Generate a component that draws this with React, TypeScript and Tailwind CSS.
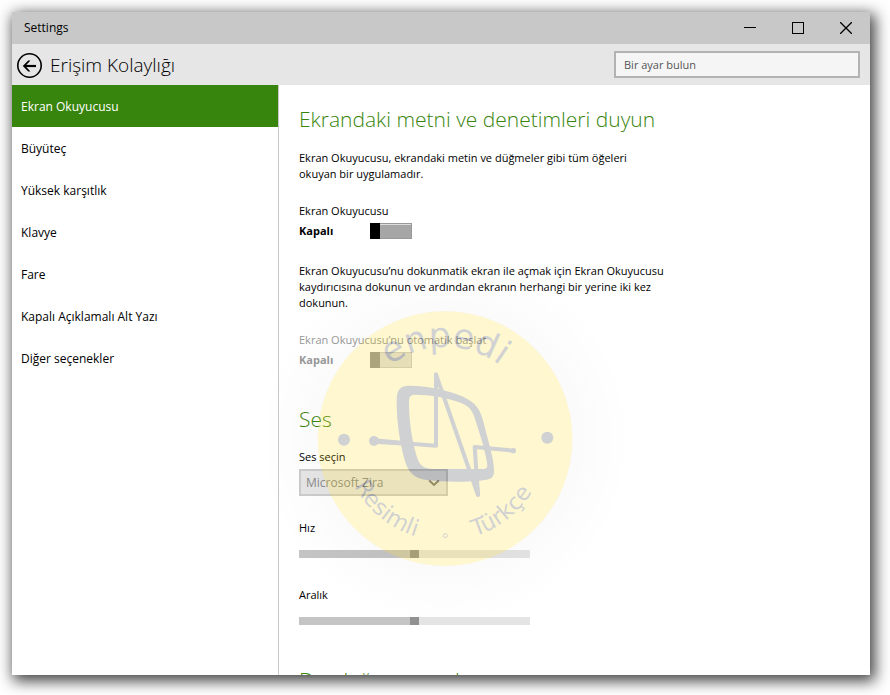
import { useState } from "react";

const NAV_ITEMS = [
  "Ekran Okuyucusu",
  "Büyüteç",
  "Yüksek karşıtlık",
  "Klavye",
  "Fare",
  "Kapalı Açıklamalı Alt Yazı",
  "Diğer seçenekler",
];

function TitleBar() {
  return (
    <div className="flex h-8 shrink-0 items-center justify-between bg-[#c8c8c8] pl-3">
      <span className="text-xs">Settings</span>
      <div className="flex h-full">
        <button aria-label="Minimize" className="flex w-12 items-center justify-center">
          <svg className="size-3" viewBox="0 0 12 12" stroke="#000" shapeRendering="crispEdges">
            <path d="M0 5.5h12" />
          </svg>
        </button>
        <button aria-label="Maximize" className="flex w-12 items-center justify-center">
          <svg className="size-3" viewBox="0 0 12 12" fill="none" stroke="#000" shapeRendering="crispEdges">
            <rect x="0.5" y="0.5" width="11" height="11" />
          </svg>
        </button>
        <button aria-label="Close" className="flex w-12 items-center justify-center">
          <svg className="size-3" viewBox="0 0 12 12" stroke="#000" strokeWidth="1.3">
            <path d="M0 0l12 12M12 0L0 12" />
          </svg>
        </button>
      </div>
    </div>
  );
}

function Header() {
  return (
    <header className="flex h-[41px] shrink-0 items-center justify-between bg-[#e6e6e6] pr-[10px] pl-[5px]">
      <div className="flex items-center gap-2 pt-0.5">
        <button aria-label="Geri">
          <svg className="size-[25px]" viewBox="0 0 25 25" fill="none" stroke="#000">
            <circle cx="12.5" cy="12.5" r="11.7" strokeWidth="1.6" />
            <path d="M19 13H8" strokeWidth="2.2" />
            <path d="M13.4 7.4h-2.2L5.8 13l5.4 5.6h2.2L8.4 13z" fill="#000" stroke="none" />
          </svg>
        </button>
        <h1 className="text-[19px] font-light">Erişim Kolaylığı</h1>
      </div>
      <input
        type="text"
        aria-label="Bir ayar bulun"
        placeholder="Bir ayar bulun"
        className="h-[27px] w-[246px] border-2 border-[#b3b3b3] bg-[#f5f5f5] px-2 text-[11px] outline-none placeholder:text-[#555555]"
      />
    </header>
  );
}

interface ToggleProps {
  id: string;
  label: string;
  disabled?: boolean;
}

function Toggle({ id, label, disabled }: ToggleProps) {
  const [on, setOn] = useState(false);
  return (
    <div className={disabled ? "text-[#999999]" : ""}>
      <label htmlFor={id} className="block leading-5">{label}</label>
      <div className="flex h-5 items-center">
        <span className="w-[71px] font-bold">{on ? "Açık" : "Kapalı"}</span>
        <button
          id={id}
          role="switch"
          aria-checked={on}
          disabled={disabled}
          onClick={() => setOn(!on)}
          className={`flex h-4 w-[42px] border ${on ? "justify-end" : "justify-start"} ${disabled ? "border-[#cccccc] bg-[#e0e0e0]" : "border-[#999999] bg-[#a6a6a6] shadow-[inset_0_1px_0_#dddddd]"}`}
        >
          <span className={`-m-px h-4 w-[10px] ${disabled ? "bg-[#999999]" : "bg-black"}`} />
        </button>
      </div>
    </div>
  );
}

function Slider({ id, label }: { id: string; label: string }) {
  return (
    <div className="w-[231px]">
      <label htmlFor={id} className="block leading-4">{label}</label>
      <input
        id={id}
        type="range"
        disabled
        defaultValue={50}
        className="mt-[14px] block h-2 w-full appearance-none bg-linear-to-r from-[#c4c4c4] from-50% to-[#e4e4e4] to-50% [&::-webkit-slider-thumb]:h-2 [&::-webkit-slider-thumb]:w-[9px] [&::-webkit-slider-thumb]:appearance-none [&::-webkit-slider-thumb]:bg-[#919191]"
      />
    </div>
  );
}

// Translucent stamp that floats over the settings
function Watermark() {
  return (
    <svg
      aria-hidden="true"
      className="pointer-events-none absolute top-[167px] left-[246px] size-[374px]"
      viewBox="-126 -144 1122 1122"
    >
      <defs>
        <radialGradient id="halo">
          <stop offset="0.68" stopColor="#000" stopOpacity="0" />
          <stop offset="0.68" stopColor="#000" stopOpacity="0.018" />
          <stop offset="1" stopColor="#000" stopOpacity="0" />
        </radialGradient>
        <path id="arcTop" d="M160 416A275 275 0 0 1 710 416" />
        <path id="arcBottom" d="M129 416A306 306 0 0 0 741 416" />
      </defs>
      <circle cx="435" cy="416" r="560" fill="url(#halo)" />
      <g opacity="0.18">
        <circle cx="435" cy="416" r="382" fill="#ffd800" />
        <g fill="#00050a" fontFamily="DejaVu Sans, sans-serif">
          <circle cx="132" cy="419" r="18" />
          <circle cx="742" cy="413" r="18" />
          <circle cx="222" cy="423" r="15" />
          <circle cx="640" cy="452" r="8" />
          <path
            fillRule="evenodd"
            d="M290 305C290 270 298 257 330 257C380 257 430 268 470 283C515 299 537 317 548 358L567 430C576 465 582 490 582 513C582 531 574 537 560 539C510 547 440 547 385 541C345 536 325 520 314 480C300 430 290 365 290 305ZM327 307C327 290 331 284 346 284C390 284 440 293 478 307C508 318 518 330 528 366L548 430C555 460 561 480 562 495C562 504 558 507 548 507L400 507C372 507 359 497 352 475C336 425 327 365 327 307Z"
          />
          <path
            d="M222 423L408 437V223L534 585L524 441L640 452"
            fill="none"
            stroke="#00050a"
            strokeWidth="12"
            strokeLinejoin="round"
          />
          <path d="M222 415L320 424V437L222 431ZM512 515L532 500L540 588H529Z" />
          <circle cx="436" cy="707" r="6" fill="none" stroke="#00050a" strokeWidth="3" />
          <text fontSize="104" textAnchor="middle">
            <textPath href="#arcTop" startOffset="50%">enpedi</textPath>
          </text>
          <text fontSize="68" textAnchor="middle">
            <textPath href="#arcBottom" startOffset="28%">Resimli</textPath>
          </text>
          <text fontSize="68" textAnchor="middle">
            <textPath href="#arcBottom" startOffset="71%">Türkçe</textPath>
          </text>
        </g>
      </g>
    </svg>
  );
}

export default function App() {
  const [active, setActive] = useState(NAV_ITEMS[0]);

  return (
    <div className="h-screen bg-white pt-3 pr-5 pb-5 pl-3 font-['Open_Sans',sans-serif] text-black">
      <div className="flex h-full flex-col bg-white shadow-[3px_4px_14px_2px_rgba(0,0,0,0.75)]">
        <TitleBar />
        <Header />
        <div className="relative flex min-h-0 flex-1 overflow-hidden">
          <nav className="flex w-[267px] shrink-0 flex-col border-r border-[#c8c8c8]">
            {NAV_ITEMS.map((item) => (
              <button
                key={item}
                onClick={() => setActive(item)}
                className={`h-[42px] px-[9px] pt-0.5 text-left text-xs ${item === active ? "bg-[#38850d] text-white" : ""}`}
              >
                {item}
              </button>
            ))}
          </nav>
          <main className="min-w-0 flex-1 overflow-hidden px-5 pt-5 text-[11px]">
            <h2 className="text-[21px] leading-7 font-light text-[#38850d]">Ekrandaki metni ve denetimleri duyun</h2>
            <p className="mt-[17px] max-w-[366px] leading-4">
              Ekran Okuyucusu, ekrandaki metin ve düğmeler gibi tüm öğeleri okuyan bir uygulamadır.
            </p>
            <div className="mt-[19px]">
              <Toggle id="narrator" label="Ekran Okuyucusu" />
            </div>
            <p className="mt-[22px] max-w-[366px] leading-4">
              Ekran Okuyucusu’nu dokunmatik ekran ile açmak için Ekran Okuyucusu kaydırıcısına dokunun ve ardından
              ekranın herhangi bir yerine iki kez dokunun.
            </p>
            <div className="mt-[19px]">
              <Toggle id="autostart" label="Ekran Okuyucusu’nu otomatik başlat" disabled />
            </div>
            <h2 className="mt-[35px] text-[21px] leading-7 font-light text-[#38850d]">Ses</h2>
            <label htmlFor="voice" className="mt-4 block leading-4">Ses seçin</label>
            <div className="relative mt-1 w-[149px]">
              <select
                id="voice"
                disabled
                className="block h-[27px] w-full appearance-none border-2 border-[#cccccc] bg-[#e6e6e6] px-[5px] text-xs text-[#8a8a8a] opacity-100"
              >
                <option>Microsoft Zira</option>
              </select>
              <svg
                className="pointer-events-none absolute top-2.5 right-2 h-2 w-3"
                viewBox="0 0 12 8"
                fill="none"
                stroke="#7a7a7a"
                strokeWidth="2"
              >
                <path d="M1.2 1.5L6 6l4.800-4.500" />
              </svg>
            </div>
            <div className="mt-6">
              <Slider id="speed" label="Hız" />
            </div>
            <div className="mt-[29px]">
              <Slider id="pitch" label="Aralık" />
            </div>
            <h2 className="mt-[41px] text-[21px] leading-7 font-light text-[#38850d]">Duyduğunuz sesler</h2>
          </main>
          <Watermark />
        </div>
      </div>
    </div>
  );
}
